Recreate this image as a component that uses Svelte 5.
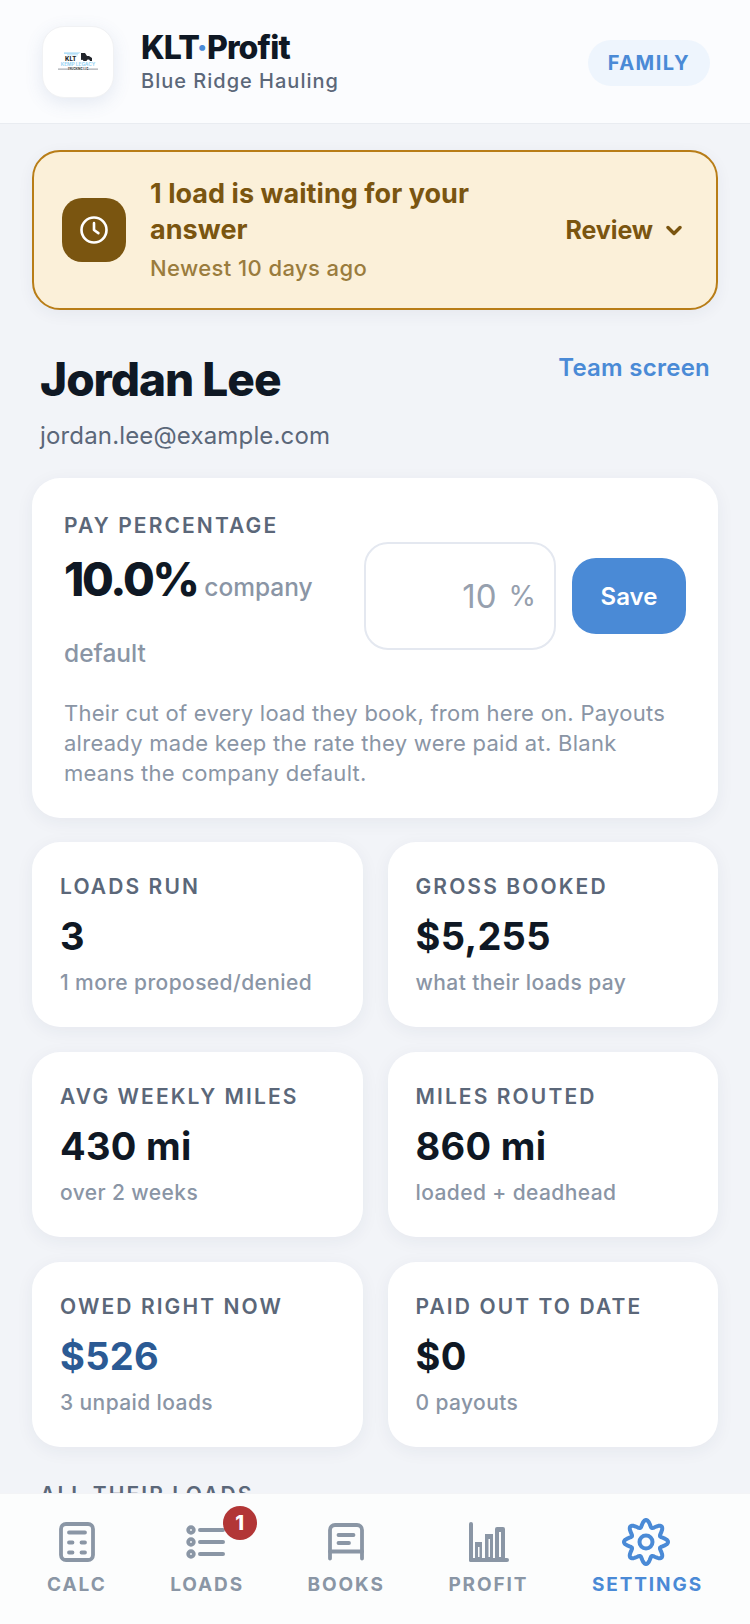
<script>
  const stats = [
    { label: 'LOADS RUN', value: '3', note: '1 more proposed/denied' },
    { label: 'GROSS BOOKED', value: '$5,255', note: 'what their loads pay' },
    { label: 'AVG WEEKLY MILES', value: '430 mi', note: 'over 2 weeks' },
    { label: 'MILES ROUTED', value: '860 mi', note: 'loaded + deadhead' },
    { label: 'OWED RIGHT NOW', value: '$526', note: '3 unpaid loads', owed: true },
    { label: 'PAID OUT TO DATE', value: '$0', note: '0 payouts' }
  ];

  // wavy cog outline, 8 lobes with one at the top
  function cogPath() {
    const pts = [];
    for (let i = 0; i < 160; i++) {
      const a = (i / 160) * Math.PI * 2;
      const r = 18.6 + 3.4 * Math.cos(8 * a);
      pts.push((25 + r * Math.sin(a)).toFixed(2) + ' ' + (25 - r * Math.cos(a)).toFixed(2));
    }
    return 'M' + pts.join('L') + 'Z';
  }
</script>

<div class="page">
  <header class="top">
    <div class="logo">
      <svg width="40" height="19" viewBox="0 0 40 19">
        <path d="M6 .5h17l-3 1.200H6zM9 2.500h11v.8H9z" fill="#9ad4f3" />
        <text x="7" y="9" class="logo-klt">KLT</text>
        <path d="M23 1h4l2 3h2l3 2v3h-2a1.800 1.800 0 0 0-3.500 0h-3a1.800 1.800 0 0 0-2.500-1z" fill="#22252b" />
        <text x="20" y="14" text-anchor="middle" class="logo-kemp">KEMP LEGACY</text>
        <path d="M0 16.500h11v1.200H0zM29 16.500h11v1.200H29z" fill="#a9adb3" />
        <text x="20" y="18" text-anchor="middle" class="logo-trucking">TRUCKING LLC</text>
      </svg>
    </div>
    <div class="brand">
      <div class="brand-name">KLT<span class="dot">·</span>Profit</div>
      <div class="brand-sub">Blue Ridge Hauling</div>
    </div>
    <span class="pill">FAMILY</span>
  </header>

  <main class="content">
    <section class="alert">
      <div class="alert-icon">
        <svg width="30" height="30" viewBox="0 0 24 24" fill="none" stroke="#fff" stroke-width="2.100" stroke-linecap="round" stroke-linejoin="round">
          <circle cx="12" cy="12" r="10" />
          <path d="M12 6.500V12l3.500 2.500" />
        </svg>
      </div>
      <div class="alert-text">
        <div class="alert-title">1 load is waiting for your answer</div>
        <div class="alert-sub">Newest 10 days ago</div>
      </div>
      <div class="review">
        Review
        <svg width="16" height="11" viewBox="0 0 16 11" fill="none" stroke="#7a5510" stroke-width="3.400" stroke-linecap="round" stroke-linejoin="round">
          <path d="M2 2.500 8 8.500 14 2.500" />
        </svg>
      </div>
    </section>

    <div class="person">
      <div>
        <h1>Jordan Lee</h1>
        <div class="email">jordan.lee@example.com</div>
      </div>
      <span class="team">Team screen</span>
    </div>

    <section class="card pay">
      <div class="eyebrow">PAY PERCENTAGE</div>
      <div class="pay-row">
        <div class="pay-rate"><b>10.0%</b> <span>company default</span></div>
        <div class="pay-form">
          <div class="field"><span class="field-num">10</span><span class="field-pct">%</span></div>
          <button class="save">Save</button>
        </div>
      </div>
      <p class="pay-help">Their cut of every load they book, from here on. Payouts already made keep the rate they were paid at. Blank means the company default.</p>
    </section>

    <section class="grid">
      {#each stats as s}
        <div class="card stat">
          <div class="eyebrow">{s.label}</div>
          <div class="stat-value" class:owed={s.owed}>{s.value}</div>
          <div class="stat-note">{s.note}</div>
        </div>
      {/each}
    </section>

    <div class="section-title">ALL THEIR LOADS</div>
  </main>

  <nav class="tabs">
    <div class="tab">
      <div class="ico">
        <svg width="36" height="40" viewBox="0 0 36 40" fill="none" stroke="currentColor" stroke-width="3.800" stroke-linecap="round">
          <rect x="2" y="2" width="32" height="36" rx="5" />
          <path d="M10 10.500h16M10 20.500h3.500M22.500 20.500h3.500M10 30.500h3.500M22.500 30.500h3.500" />
        </svg>
      </div>
      <span>CALC</span>
    </div>
    <div class="tab">
      <div class="ico badged">
        <svg width="40" height="34" viewBox="0 0 40 34" fill="none" stroke="currentColor" stroke-linecap="round">
          <path d="M14 5h23M14 17h23M14 29h23" stroke-width="4" />
          <circle cx="5" cy="5" r="2.800" stroke-width="3.800" />
          <circle cx="5" cy="17" r="2.800" stroke-width="3.800" />
          <circle cx="5" cy="29" r="2.800" stroke-width="3.800" />
        </svg>
        <b class="badge">1</b>
      </div>
      <span>LOADS</span>
    </div>
    <div class="tab">
      <div class="ico">
        <svg width="36" height="38" viewBox="0 0 36 38" fill="none" stroke="currentColor" stroke-width="3.800" stroke-linecap="round" stroke-linejoin="round">
          <path d="M2 35.500V7a5 5 0 0 1 5-5h22a5 5 0 0 1 5 5v28.500" />
          <path d="M2 28.500h32" />
          <path d="M10.500 12h15M10.500 20h10.500" />
        </svg>
      </div>
      <span>BOOKS</span>
    </div>
    <div class="tab">
      <div class="ico">
        <svg width="42" height="40" viewBox="0 0 42 40" fill="currentColor">
          <rect x="2" y="0" width="4" height="40" rx="2" />
          <rect x="2" y="36" width="40" height="4" rx="2" />
          <path fill-rule="evenodd" d="M8 20h7v17H8zM11 25v10h1.500V25zM18 12h8v25h-8zM21.500 17v18H23V17zM28 7a2 2 0 0 1 2-2h6a2 2 0 0 1 2 2v30H28zM32 10v25h2V10z" />
        </svg>
      </div>
      <span>PROFIT</span>
    </div>
    <div class="tab active">
      <div class="ico gear">
        <svg width="50" height="50" viewBox="0 0 50 50" fill="none" stroke="currentColor" stroke-width="4" stroke-linejoin="round">
          <path d={cogPath()} />
          <circle cx="25" cy="25" r="6.500" />
        </svg>
      </div>
      <span>SETTINGS</span>
    </div>
  </nav>
</div>

<style>
  :global(body) {
    margin: 0;
    background: #f2f4f8;
  }
  .page {
    position: relative;
    height: 1624px;
    overflow: hidden;
    background: #f2f4f8;
    font-family: Inter, "Liberation Sans", sans-serif;
    color: #0f1824;
  }
  .top {
    height: 124px;
    box-sizing: border-box;
    display: flex;
    align-items: center;
    padding: 0 40px 0 42px;
    background: #fbfcfe;
    border-bottom: 1px solid #e9ecf1;
  }
  .logo {
    width: 72px;
    height: 72px;
    flex: none;
    border-radius: 22px;
    background: #fff;
    border: 1px solid #f1f2f4;
    box-sizing: border-box;
    box-shadow: 0 5px 18px rgba(74, 111, 165, 0.13);
    display: flex;
    align-items: center;
    justify-content: center;
    margin-right: 27px;
  }
  .logo-klt {
    font-size: 6px;
    font-weight: 800;
    fill: #22252b;
  }
  .logo-kemp {
    font-size: 4.800px;
    font-weight: 700;
    fill: #9ad4f3;
  }
  .logo-trucking {
    font-size: 2.800px;
    font-weight: 700;
    fill: #22252b;
  }
  .brand {
    flex: 1;
    padding-bottom: 2px;
  }
  .brand-name {
    font-size: 32px;
    line-height: 40px;
    font-weight: 800;
    letter-spacing: -0.85px;
  }
  .dot {
    color: #4a8ad6;
  }
  .brand-sub {
    font-size: 20px;
    line-height: 26px;
    font-weight: 500;
    letter-spacing: 1px;
    color: #5b6779;
  }
  .pill {
    height: 46px;
    margin-top: 2px;
    padding: 0 20px;
    border-radius: 23px;
    display: flex;
    align-items: center;
    background: #eef5fd;
    color: #4a8ad6;
    font-size: 20px;
    font-weight: 700;
    letter-spacing: 1.500px;
  }
  .content {
    padding: 26px 32px 0;
  }
  .alert {
    height: 160px;
    box-sizing: border-box;
    display: flex;
    align-items: center;
    padding: 0 34px 0 28px;
    background: #fbf0d9;
    border: 2px solid #b87d17;
    border-radius: 28px;
    box-shadow: 0 4px 16px rgba(30, 50, 90, 0.06);
  }
  .alert-icon {
    width: 64px;
    height: 64px;
    flex: none;
    border-radius: 20px;
    background: #7a5510;
    display: flex;
    align-items: center;
    justify-content: center;
    margin-right: 24px;
  }
  .alert-text {
    flex: 1;
    padding-right: 40px;
  }
  .alert-title {
    font-size: 27px;
    line-height: 36px;
    font-weight: 700;
    letter-spacing: 0.05px;
    color: #7a5510;
    margin-top: -2px;
  }
  .alert-sub {
    margin-top: 6px;
    font-size: 22px;
    line-height: 28px;
    font-weight: 500;
    letter-spacing: 0.4px;
    color: #9a7c3d;
  }
  .review {
    display: flex;
    align-items: center;
    gap: 13px;
    font-size: 25px;
    font-weight: 700;
    letter-spacing: -0.1px;
    color: #7a5510;
  }
  .person {
    display: flex;
    justify-content: space-between;
    align-items: flex-start;
    padding: 40px 8px 0 8px;
  }
  h1 {
    margin: 0;
    font-size: 46px;
    line-height: 56px;
    font-weight: 800;
    letter-spacing: -1px;
    position: relative;
    top: 1px;
  }
  .email {
    margin-top: 15px;
    font-size: 24px;
    line-height: 30px;
    letter-spacing: 0.16px;
    color: #5b6779;
  }
  .team {
    font-size: 24px;
    font-weight: 600;
    letter-spacing: 0.25px;
    color: #4a8ad6;
    line-height: 30px;
    margin-top: 3px;
  }
  .card {
    background: #fff;
    border-radius: 28px;
    box-shadow: 0 4px 18px rgba(30, 50, 90, 0.06);
  }
  .pay {
    margin-top: 27px;
    height: 340px;
    box-sizing: border-box;
    padding: 33px 32px 0;
  }
  .eyebrow {
    font-size: 21px;
    line-height: 30px;
    font-weight: 600;
    letter-spacing: 2.100px;
    color: #5b6779;
  }
  .pay-row {
    display: flex;
    align-items: flex-start;
    gap: 16px;
  }
  .pay-rate {
    flex: 1;
    margin-top: 5px;
    line-height: 66px;
    font-size: 24.500px;
    font-weight: 500;
    color: #8a95a5;
  }
  .pay-rate b {
    font-size: 46px;
    font-weight: 800;
    letter-spacing: -2.200px;
    color: #0f1824;
  }
  .pay-form {
    display: flex;
    align-items: center;
    gap: 16px;
    margin-top: 1px;
  }
  .field {
    width: 192px;
    height: 108px;
    box-sizing: border-box;
    border: 2px solid #e4e8f0;
    border-radius: 24px;
    display: flex;
    align-items: center;
    justify-content: flex-end;
    gap: 12px;
    padding-right: 18px;
    color: #96a0ae;
  }
  .field-num {
    font-size: 33px;
  }
  .field-pct {
    font-size: 28px;
  }
  .save {
    width: 114px;
    height: 76px;
    border: 0;
    border-radius: 24px;
    background: #4a8ad6;
    color: #fff;
    font: 600 24px Inter, sans-serif;
  }
  .pay-help {
    margin: 12px 0 0;
    font-size: 22px;
    line-height: 30px;
    letter-spacing: 0.27px;
    color: #8a95a5;
  }
  .grid {
    margin-top: 24px;
    display: grid;
    grid-template-columns: 1fr 1fr;
    gap: 25px;
  }
  .stat {
    height: 185px;
    box-sizing: border-box;
    padding: 30px 28px 0;
  }
  .stat-value {
    margin-top: 9px;
    font-size: 38px;
    line-height: 50px;
    font-weight: 700;
    letter-spacing: 0.3px;
    color: #0f1824;
  }
  .stat-value.owed {
    color: #2b5a94;
  }
  .stat-note {
    margin-top: 8px;
    font-size: 21px;
    line-height: 28px;
    font-weight: 500;
    letter-spacing: 0.4px;
    color: #8a95a5;
  }
  .section-title {
    margin: 34px 8px 0;
    font-size: 21px;
    line-height: 28px;
    font-weight: 600;
    letter-spacing: 2.100px;
    color: #5b6779;
  }
  .tabs {
    position: absolute;
    left: 0;
    right: 0;
    bottom: 0;
    height: 131px;
    box-sizing: border-box;
    display: flex;
    justify-content: space-between;
    padding: 0 47px;
    background: #fcfdfd;
    border-top: 1px solid #f3f4f6;
  }
  .tab {
    display: flex;
    flex-direction: column;
    align-items: center;
    justify-content: flex-end;
    height: 103px;
    gap: 11px;
    font-size: 19px;
    line-height: 24px;
    font-weight: 700;
    letter-spacing: 1.900px;
    color: #8a96a5;
  }
  .tab.active {
    color: #4a8ad6;
  }
  .ico {
    height: 40px;
    display: flex;
    align-items: center;
  }
  .ico svg {
    flex: none;
  }
  .gear {
    margin-left: -2px;
  }
  .badged {
    position: relative;
    margin-left: -3px;
  }
  .badge {
    position: absolute;
    top: -16px;
    left: 37px;
    width: 34px;
    height: 34px;
    border-radius: 50%;
    background: #b23636;
    color: #fff;
    font-size: 20px;
    font-weight: 800;
    line-height: 34px;
    text-align: center;
    letter-spacing: 0;
  }
</style>
